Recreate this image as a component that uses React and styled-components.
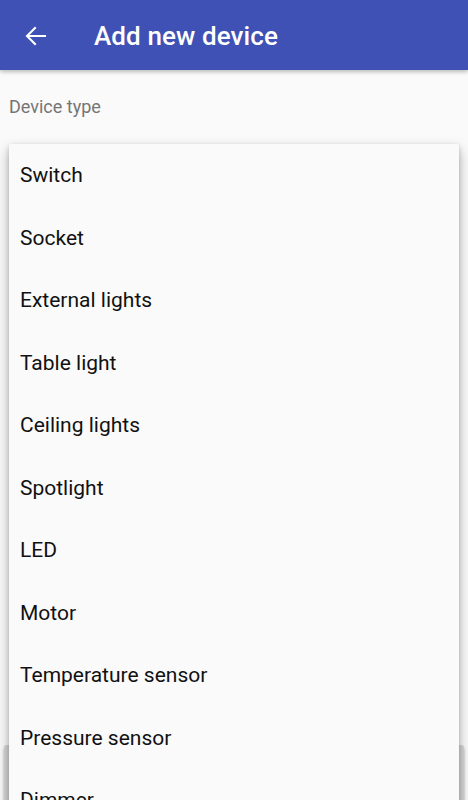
import styled, { createGlobalStyle } from 'styled-components'

const Global = createGlobalStyle`
  html, body {
    margin: 0;
    padding: 0;
    background: #fafafa;
    font-family: Roboto, "Noto Sans", sans-serif;
  }
  body { overflow: hidden; }
`

const Screen = styled.div`
  position: relative;
  width: 468px;
  height: 800px;
  overflow: hidden;
  background: #fafafa;
  display: flex;
  flex-direction: column;
`

const Toolbar = styled.header`
  flex: none;
  height: 70px;
  background: #3f51b5;
  display: flex;
  align-items: center;
  box-shadow: 0 2px 4px rgba(0, 0, 0, 0.25);
  position: relative;
  z-index: 1;
`

const BackButton = styled.button`
  width: 72px;
  height: 70px;
  border: 0;
  background: none;
  padding: 2px 0 0 24px;
  display: flex;
  align-items: center;
  color: #fff;
`

const Title = styled.h1`
  margin: 2px 0 0 22px;
  color: #fff;
  font-size: 26px;
  font-weight: 500;
  letter-spacing: 0.1px;
`

const Form = styled.main`
  flex: 1;
  display: flex;
  flex-direction: column;
  padding: 0 4px;
`

const Label = styled.div`
  padding: 26px 5px 0;
  font-size: 18px;
  color: #757575;
`

const SaveButton = styled.button`
  margin-top: auto;
  margin-bottom: -20px;
  height: 75px;
  border: 0;
  border-radius: 3px;
  background: #d6d7d7;
  box-shadow: 0 2px 3px rgba(0, 0, 0, 0.3);
`

const Popup = styled.ul`
  position: absolute;
  left: 9px;
  top: 144px;
  width: 450px;
  margin: 0;
  padding: 0;
  list-style: none;
  background: #fafafa;
  border-radius: 2px;
  box-shadow: 0 6px 14px rgba(0, 0, 0, 0.28), 0 2px 5px rgba(0, 0, 0, 0.18);
  z-index: 2;
`

const Item = styled.li`
  height: 62.5px;
  display: flex;
  align-items: center;
  padding: 0 11px;
  font-size: 21px;
  color: #111;
`

const types = [
  'Switch',
  'Socket',
  'External lights',
  'Table light',
  'Ceiling lights',
  'Spotlight',
  'LED',
  'Motor',
  'Temperature sensor',
  'Pressure sensor',
  'Dimmer',
  'Other',
]

export default function App() {
  return (
    <Screen>
      <Global />
      <Toolbar>
        <BackButton aria-label="Back">
          <svg width="24" height="24" viewBox="0 0 24 24" fill="none" stroke="#fff" strokeWidth="2.1" strokeLinecap="square">
            <path d="M21 12H4M11 4l-8 8 8 8" />
          </svg>
        </BackButton>
        <Title>Add new device</Title>
      </Toolbar>
      <Form>
        <Label>Device type</Label>
        <SaveButton />
      </Form>
      <Popup>
        {types.map((t) => (
          <Item key={t}>{t}</Item>
        ))}
      </Popup>
    </Screen>
  )
}
